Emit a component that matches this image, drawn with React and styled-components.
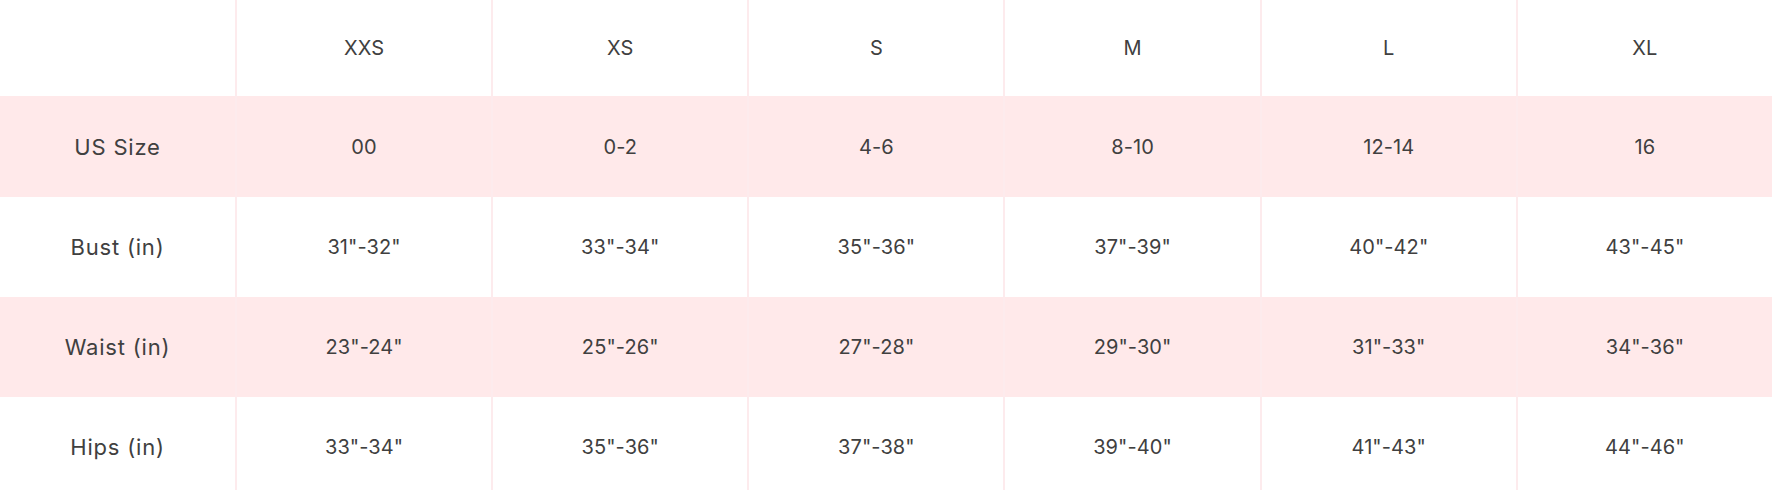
import styled, { createGlobalStyle } from "styled-components";

const GlobalStyle = createGlobalStyle`
  body {
    margin: 0;
    background: #ffffff;
    font-family: "Inter", "Noto Sans", sans-serif;
  }
`;

const sizes = ["XXS", "XS", "S", "M", "L", "XL"];

const rows = [
  { label: "US Size", values: ["00", "0-2", "4-6", "8-10", "12-14", "16"] },
  { label: "Bust (in)", values: ['31"-32"', '33"-34"', '35"-36"', '37"-39"', '40"-42"', '43"-45"'] },
  { label: "Waist (in)", values: ['23"-24"', '25"-26"', '27"-28"', '29"-30"', '31"-33"', '34"-36"'] },
  { label: "Hips (in)", values: ['33"-34"', '35"-36"', '37"-38"', '39"-40"', '41"-43"', '44"-46"'] },
];

const StTable = styled.div`
  width: 1772px;
  height: 490px;
  overflow: hidden;
  display: flex;
  flex-direction: column;
`;

const StRow = styled.div`
  display: grid;
  grid-template-columns: 235px repeat(6, 1fr);
  height: ${(props) => props.$height}px;
  flex-shrink: 0;
  background-color: ${(props) => (props.$pink ? "#ffe9ea" : "#ffffff")};
`;

const StCell = styled.div`
  display: flex;
  align-items: center;
  justify-content: center;
  border-left: 2px solid #fdebed;
  font-size: 20px;
  color: #404040;
  letter-spacing: 0.1px;
`;

const StLabel = styled(StCell)`
  border-left: none;
  font-size: 22px;
  letter-spacing: 0.8px;
`;

const App = () => {
  return (
    <>
      <GlobalStyle />
      <StTable>
        <StRow $height={96}>
          <StLabel />
          {sizes.map((size) => (
            <StCell key={size}>{size}</StCell>
          ))}
        </StRow>
        {rows.map((row, index) => (
          <StRow key={row.label} $height={index === 0 ? 101 : 100} $pink={index % 2 === 0}>
            <StLabel>{row.label}</StLabel>
            {row.values.map((value, i) => (
              <StCell key={i}>{value}</StCell>
            ))}
          </StRow>
        ))}
      </StTable>
    </>
  );
};

export default App;
